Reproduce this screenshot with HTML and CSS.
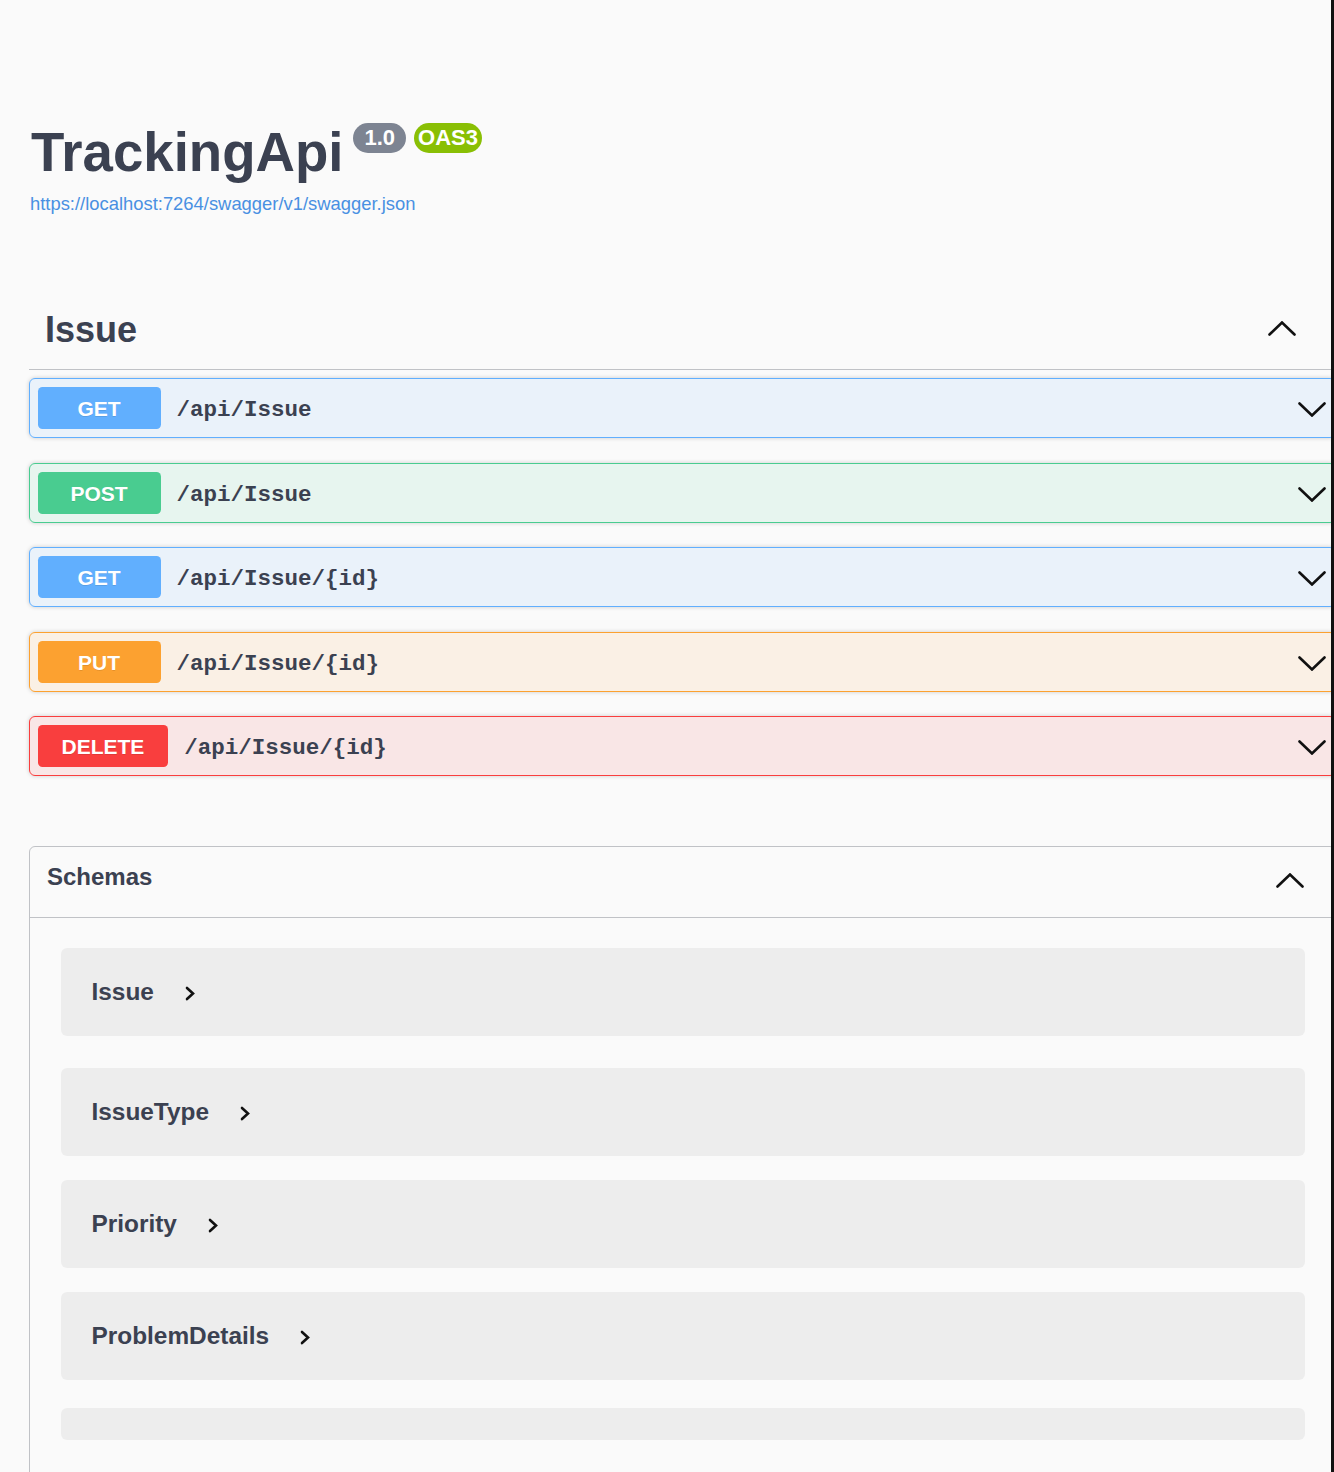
FILE: index.html
```html
<!DOCTYPE html>
<html lang="en">
<head>
<meta charset="utf-8">
<title>TrackingApi - Swagger UI</title>
<link rel="stylesheet" href="styles.css">
</head>
<body>
<div class="page">
  <section class="info">
    <div class="title-row">
      <h2 class="title">TrackingApi</h2>
      <span class="badge badge-version">1.0</span>
      <span class="badge badge-oas">OAS3</span>
    </div>
    <a class="url" href="#">https://localhost:7264/swagger/v1/swagger.json</a>
  </section>

  <section class="tag-section">
    <div class="tag">
      <h3 class="tag-name">Issue</h3>
      <svg class="chev-lg tag-chev" viewBox="0 0 28 15"><polyline points="1.5,13.5 14,1.5 26.5,13.5"/></svg>
    </div>
    <div class="ops">
      <div class="op op-get">
        <span class="method">GET</span>
        <span class="path">/api/Issue</span>
        <svg class="chev-lg op-chev" viewBox="0 0 28 15"><polyline points="1.5,1.5 14,13.5 26.5,1.5"/></svg>
      </div>
      <div class="op op-post">
        <span class="method">POST</span>
        <span class="path">/api/Issue</span>
        <svg class="chev-lg op-chev" viewBox="0 0 28 15"><polyline points="1.5,1.5 14,13.5 26.5,1.5"/></svg>
      </div>
      <div class="op op-get">
        <span class="method">GET</span>
        <span class="path">/api/Issue/{id}</span>
        <svg class="chev-lg op-chev" viewBox="0 0 28 15"><polyline points="1.5,1.5 14,13.5 26.5,1.5"/></svg>
      </div>
      <div class="op op-put">
        <span class="method">PUT</span>
        <span class="path">/api/Issue/{id}</span>
        <svg class="chev-lg op-chev" viewBox="0 0 28 15"><polyline points="1.5,1.5 14,13.5 26.5,1.5"/></svg>
      </div>
      <div class="op op-delete">
        <span class="method">DELETE</span>
        <span class="path">/api/Issue/{id}</span>
        <svg class="chev-lg op-chev" viewBox="0 0 28 15"><polyline points="1.5,1.5 14,13.5 26.5,1.5"/></svg>
      </div>
    </div>
  </section>

  <section class="schemas">
    <div class="schemas-head">
      <h4 class="schemas-title">Schemas</h4>
      <svg class="chev-lg schemas-chev" viewBox="0 0 28 15"><polyline points="1.5,13.5 14,1.5 26.5,13.5"/></svg>
    </div>
    <div class="models">
      <div class="model"><span class="model-title">Issue</span><svg class="chev-sm" viewBox="0 0 10 15"><polyline points="2,2 8,7.5 2,13"/></svg></div>
      <div class="model"><span class="model-title">IssueType</span><svg class="chev-sm" viewBox="0 0 10 15"><polyline points="2,2 8,7.5 2,13"/></svg></div>
      <div class="model"><span class="model-title">Priority</span><svg class="chev-sm" viewBox="0 0 10 15"><polyline points="2,2 8,7.5 2,13"/></svg></div>
      <div class="model"><span class="model-title">ProblemDetails</span><svg class="chev-sm" viewBox="0 0 10 15"><polyline points="2,2 8,7.5 2,13"/></svg></div>
      <div class="model model-empty"></div>
    </div>
  </section>
</div>
<div class="edge"></div>
</body>
</html>
```

FILE: styles.css
```css
html, body {
  margin: 0;
  padding: 0;
  overflow: hidden;
  background: #fafafa;
}

body {
  font-family: "Liberation Sans", Arial, sans-serif;
  color: #3b4151;
  height: 1472px;
}

.page {
  width: 1307px;
  margin-left: 29px;
  padding-top: 122px;
}

/* ---------- info ---------- */
.title-row {
  display: flex;
  align-items: flex-start;
}

.title {
  margin: 0;
  padding-left: 2px;
  font-size: 54.6px;
  line-height: 62px;
  font-weight: 700;
  color: #3b4151;
}

.badge {
  margin-top: 1px;
  height: 30px;
  box-sizing: border-box;
  padding: 3px 0;
  border-radius: 60px;
  color: #fff;
  font-size: 22px;
  line-height: 24px;
  font-weight: 700;
}

.badge-version {
  margin-left: 10px;
  padding-left: 11px;
  padding-right: 11px;
  background: #7d8492;
}

.badge-oas {
  margin-left: 8px;
  padding-left: 4px;
  padding-right: 4px;
  background: #89bf04;
}

.url {
  display: block;
  margin-top: 9px;
  margin-left: 1px;
  font-size: 18.4px;
  line-height: 21px;
  color: #4990e2;
  text-decoration: none;
}

/* ---------- tag ---------- */
.tag-section {
  margin-top: 76px;
}

.tag {
  display: flex;
  align-items: center;
  justify-content: space-between;
  box-sizing: border-box;
  height: 80px;
  padding-left: 16px;
  border-bottom: 1.5px solid rgba(59, 65, 81, 0.3);
}

.tag-name {
  margin: 0;
  font-size: 36px;
  font-weight: 700;
  line-height: 42px;
  color: #3b4151;
}

.chev-lg {
  width: 28px;
  height: 15px;
  flex: none;
}

.chev-lg polyline,
.chev-sm polyline {
  fill: none;
  stroke: #111;
  stroke-width: 2.6;
  stroke-linecap: round;
  stroke-linejoin: miter;
}

.tag-chev {
  margin-right: 40px;
  margin-bottom: 2px;
}

/* ---------- operations ---------- */
.ops {
  display: flex;
  flex-direction: column;
  gap: 24.5px;
  margin-top: 8px;
}

.op {
  display: flex;
  align-items: center;
  box-sizing: border-box;
  height: 60px;
  padding: 0 9px 0 7.5px;
  border: 1.5px solid;
  border-radius: 6px;
  box-shadow: 0 0 4px rgba(0, 0, 0, 0.19);
}

.method {
  box-sizing: border-box;
  min-width: 123px;
  height: 42px;
  padding: 0 24px;
  border-radius: 4.5px;
  color: #fff;
  font-size: 21px;
  line-height: 43px;
  font-weight: 700;
  text-align: center;
  text-shadow: 0 1px 0 rgba(0, 0, 0, 0.1);
}

.path {
  margin-left: 16px;
  padding-top: 4px;
  font-family: "Liberation Mono", "Courier New", monospace;
  font-size: 22.5px;
  font-weight: 700;
  color: #3b4151;
}

.op-chev {
  margin-left: auto;
  margin-top: 3px;
}

.op-get { background: rgba(97, 175, 254, 0.1); border-color: #61affe; }
.op-get .method { background: #61affe; }

.op-post { background: rgba(73, 204, 144, 0.1); border-color: #49cc90; }
.op-post .method { background: #49cc90; }

.op-put { background: rgba(252, 161, 48, 0.1); border-color: #fca130; }
.op-put .method { background: #fca130; }

.op-delete { background: rgba(249, 62, 62, 0.1); border-color: #f93e3e; }
.op-delete .method { background: #f93e3e; }

/* ---------- schemas ---------- */
.schemas {
  margin-top: 70px;
  border: 1.5px solid rgba(59, 65, 81, 0.3);
  border-radius: 6px;
}

.schemas-head {
  display: flex;
  align-items: center;
  justify-content: space-between;
  height: 69.5px;
  padding-left: 17px;
  border-bottom: 1.5px solid rgba(59, 65, 81, 0.3);
}

.schemas-title {
  margin: 0 0 9px;
  font-size: 24px;
  font-weight: 700;
  color: #3b4151;
}

.schemas-chev {
  margin-right: 31px;
  margin-bottom: 3px;
}

.models {
  display: flex;
  flex-direction: column;
  padding: 30.5px 30.5px 40px;
}

.model {
  display: flex;
  align-items: center;
  height: 88px;
  padding-left: 31px;
  border-radius: 6px;
  background: rgba(0, 0, 0, 0.05);
  margin-top: 24px;
}

.model:first-child { margin-top: 0; }
.model:nth-child(2) { margin-top: 32px; }
.model:nth-child(5) { margin-top: 28px; }

.model-empty {
  height: 32px;
}

.model-title {
  font-size: 24.4px;
  font-weight: 700;
  color: #3b4151;
}

.chev-sm {
  width: 10px;
  height: 15px;
  margin-left: 31px;
  margin-top: 2px;
  flex: none;
}

.edge {
  position: fixed;
  top: 0;
  right: 0;
  width: 3px;
  height: 100%;
  background: #111;
}
```
